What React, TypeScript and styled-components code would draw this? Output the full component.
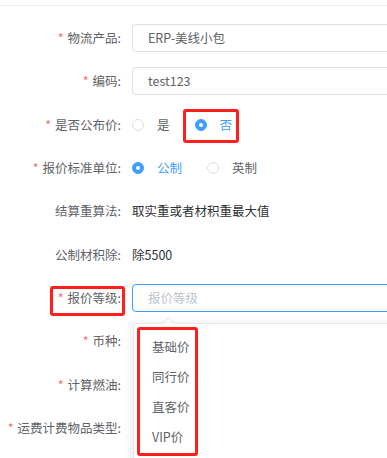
import React from "react";
import styled, {createGlobalStyle} from "styled-components";

const GlobalStyle = createGlobalStyle`
  body {
    margin: 0;
    background: #fff;
    overflow: hidden;
    font-family: "Noto Sans CJK SC", "Noto Sans", sans-serif;
  }
`;

const Page = styled.div`
  position: relative;
  width: 387px;
  height: 458px;
  overflow: hidden;
  font-size: 12.5px;
`;

const TopBar = styled.div`
  height: 5px;
  border-bottom: 1px solid #eef0f5;
`;

const Form = styled.div`
  padding-top: 18px;
`;

const FormItem = styled.div`
  display: flex;
  height: 28px;
  margin-bottom: 15.33px;
`;

const Label = styled.div`
  position: relative;
  flex-shrink: 0;
  width: 132px;
  box-sizing: border-box;
  padding-right: 11px;
  text-align: right;
  line-height: 28px;
  color: #606266;
  white-space: nowrap;
`;

const Star = styled.span`
  color: #f56c6c;
  margin-right: 4px;
`;

const Content = styled.div`
  position: relative;
  flex: 1;
  display: flex;
  align-items: center;
  min-width: 0;
`;

const Input = styled.div<{ $focused?: boolean; $placeholder?: boolean }>`
  width: 320px;
  flex-shrink: 0;
  height: 28px;
  box-sizing: border-box;
  padding: 0 15px;
  border: 1px solid ${p => (p.$focused ? "#409eff" : "#dcdfe6")};
  border-radius: 4px;
  line-height: 26px;
  color: ${p => (p.$placeholder ? "#c0c4cc" : "#606266")};
`;

const PlainValue = styled.span`
  color: #303133;
  line-height: 28px;
`;

const RadioItem = styled.div`
  position: relative;
  display: flex;
  align-items: center;
  height: 28px;
  margin-right: 25px;
`;

const RadioCircle = styled.span<{ $checked?: boolean }>`
  width: 12px;
  height: 12px;
  box-sizing: border-box;
  border-radius: 50%;
  border: 1px solid ${p => (p.$checked ? "#409eff" : "#dcdfe6")};
  background: ${p => (p.$checked ? "#409eff" : "#fff")};
  display: flex;
  align-items: center;
  justify-content: center;

  &::after {
    content: "";
    width: 4px;
    height: 4px;
    border-radius: 50%;
    background: #fff;
    display: ${p => (p.$checked ? "block" : "none")};
  }
`;

const RadioText = styled.span<{ $checked?: boolean }>`
  padding-left: 13px;
  color: ${p => (p.$checked ? "#409eff" : "#606266")};
`;

const Dropdown = styled.div`
  position: absolute;
  left: 1px;
  top: 39px;
  width: 300px;
  height: 140px;
  box-sizing: border-box;
  padding-top: 8px;
  background: #fff;
  border: 1px solid #e4e7ed;
  border-radius: 4px;
  box-shadow: 0 2px 12px rgba(0, 0, 0, 0.1);
  z-index: 2;

  &::before {
    content: "";
    position: absolute;
    left: 30px;
    top: -5px;
    width: 8px;
    height: 8px;
    background: #fff;
    border-left: 1px solid #e4e7ed;
    border-top: 1px solid #e4e7ed;
    transform: rotate(45deg);
  }
`;

const Option = styled.div`
  height: 30px;
  line-height: 30px;
  padding-left: 18px;
  color: #606266;
`;

const Mark = styled.div<{ $l: number; $t: number; $w: number; $h: number }>`
  position: absolute;
  left: ${p => p.$l}px;
  top: ${p => p.$t}px;
  width: ${p => p.$w}px;
  height: ${p => p.$h}px;
  box-sizing: border-box;
  border: 3px solid #ff1f1f;
  border-radius: 3px;
  pointer-events: none;
  z-index: 3;
`;

function Radio({label, checked, children}: { label: string; checked?: boolean; children?: React.ReactNode }) {
    return (
        <RadioItem>
            <RadioCircle $checked={checked}/>
            <RadioText $checked={checked}>{label}</RadioText>
            {children}
        </RadioItem>
    );
}

function Field({label, required, children, mark}: {
    label: string;
    required?: boolean;
    children?: React.ReactNode;
    mark?: boolean;
}) {
    return (
        <FormItem>
            <Label>
                {required && <Star>*</Star>}
                {label}:
                {mark && <Mark $l={50} $t={2} $w={75} $h={30}/>}
            </Label>
            <Content>{children}</Content>
        </FormItem>
    );
}

export default function App() {
    return (
        <Page>
            <GlobalStyle/>
            <TopBar/>
            <Form>
                <Field label="物流产品" required>
                    <Input>ERP-美线小包</Input>
                </Field>
                <Field label="编码" required>
                    <Input>test123</Input>
                </Field>
                <Field label="是否公布价" required>
                    <Radio label="是"/>
                    <Radio label="否" checked>
                        <Mark $l={-12} $t={-2} $w={56} $h={34}/>
                    </Radio>
                </Field>
                <Field label="报价标准单位" required>
                    <Radio label="公制" checked/>
                    <Radio label="英制"/>
                </Field>
                <Field label="结算重算法">
                    <PlainValue>取实重或者材积重最大值</PlainValue>
                </Field>
                <Field label="公制材积除">
                    <PlainValue>除5500</PlainValue>
                </Field>
                <Field label="报价等级" required mark>
                    <Input $focused $placeholder>报价等级</Input>
                    <Dropdown>
                        <Option>基础价</Option>
                        <Option>同行价</Option>
                        <Option>直客价</Option>
                        <Option>VIP价</Option>
                        <Mark $l={3} $t={3} $w={61} $h={129}/>
                    </Dropdown>
                </Field>
                <Field label="币种" required/>
                <Field label="计算燃油" required/>
                <Field label="运费计费物品类型" required/>
            </Form>
        </Page>
    );
}
